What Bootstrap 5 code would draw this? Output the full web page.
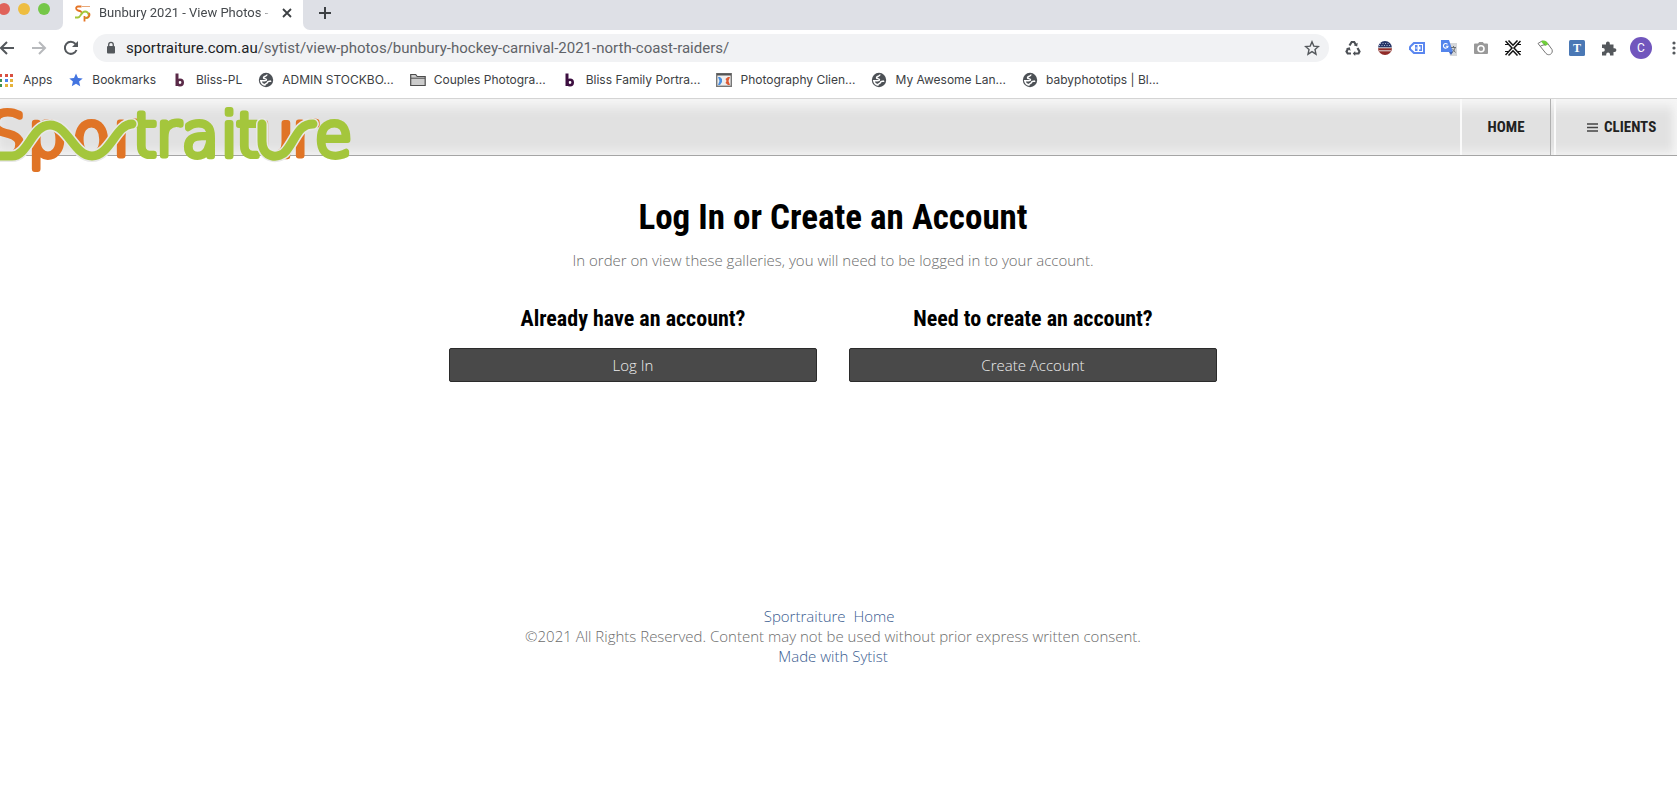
<!DOCTYPE html>
<html lang="en">
<head>
<meta charset="utf-8">
<meta name="viewport" content="width=device-width, initial-scale=1">
<title>Bunbury 2021 - View Photos</title>
<link href="https://cdn.jsdelivr.net/npm/bootstrap@5.3.0/dist/css/bootstrap.min.css" rel="stylesheet">
<style>
body{font-family:"Open Sans",sans-serif;font-weight:300;font-size:15px;line-height:20px;color:#6c6c6c;background:#fff;overflow-x:hidden}
svg{display:block;flex:none}
.browser{font-family:Roboto,sans-serif;font-weight:400;color:#3c4043;border-bottom:1px solid #d4d4d4}
.tabstrip{height:30px;background:#dee0e6}
.lights{width:63px;height:30px;background:#fff}
.lights>div{height:30px;background:#dee0e6;border-bottom-right-radius:7px;padding:3px 0 0}
.light-dot{width:12px;height:12px;border-radius:50%;margin-right:8px}
.page-tab{width:240px;background:#fff;font-size:13px;line-height:26px;padding:0 10px 4px 12px}
.tab-title{color:#45494d;-webkit-mask-image:linear-gradient(90deg,#000 92%,transparent);mask-image:linear-gradient(90deg,#000 92%,transparent)}
.after-tab{background:#fff}
.after-tab>div{background:#dee0e6;border-bottom-left-radius:7px;height:30px;padding:0 15px 4px}
.plain{border:0;background:none;padding:0;color:inherit;display:flex;align-items:center;justify-content:center}
.toolbar{height:36px}
.navs{width:93px}
.navs .plain{width:32px}
.navs .plain:first-child{width:14px;margin-right:9px}
.urlbar{height:28px;border-radius:14px;background:#f1f2f4;padding:0 9px 0 11px;font-size:15px;color:#5f6368}
.urlbar b{font-weight:400;color:#202124}
.ext{width:32px;height:28px}
.ext-more{width:20px;height:28px}
.avatar-c{width:22px;height:22px;border-radius:50%;background:#7156bd;color:#fff;font-size:12px}
.marks{height:32px;gap:16px;font-family:Inter,Roboto,sans-serif;font-size:12px;line-height:16px;padding-bottom:4px}
.marks a{color:#3c4043;text-decoration:none;display:flex;align-items:center;gap:8px;white-space:nowrap}
.cond{font-family:"Liberation Sans Narrow","Roboto Condensed","Open Sans Condensed","DejaVu Sans Condensed",sans-serif;font-weight:700}
.sitebar{height:57px;background:#e1e1e1;border-bottom:1px solid #a5a5a5;box-shadow:inset 0 12px 12px -4px #f6f6f6,inset -8px 0 8px -4px #f4f4f4,inset 0 -10px 10px -6px #f2f2f2}
.sitebar .brand{height:57px}
.sitebar nav a{color:#222;text-decoration:none;font-size:15px;line-height:54px;height:56px;border-left:2px solid #fafafa;display:flex;align-items:center}
.nav-home{width:91px;border-right:1px solid #b0b0b0;justify-content:center}
.nav-clients{width:123px;margin-left:3px;padding-left:31px;gap:6px}
.content{padding:40px 11px 0 0}
.login{width:768px;max-width:100%}
h1{font-size:35px;line-height:44px;color:#000;margin:0}
h2{font-size:22px;line-height:28px;color:#000;margin:0 0 15px}
.intro{margin:10px 0 35px}
.login .row{--bs-gutter-x:32px}
.dark-btn{background:#494949;border:1px solid #2b2b2b;border-radius:2px;color:#eee;font-weight:300;font-size:15px;line-height:20px;padding:6px}
footer{padding:224px 11px 0 0}
footer a{color:#3a5c90;text-decoration:none}
</style>
<script src="https://cdn.jsdelivr.net/npm/bootstrap@5.3.0/dist/js/bootstrap.bundle.min.js"></script>
</head>
<body>
<svg width="0" height="0" class="position-absolute" aria-hidden="true">
<symbol id="globe" viewBox="0 0 16 16"><circle cx="8" cy="8" r="7.200" fill="#4d5156"/><path d="M8.800 2.500c.6 2-3.600 1.500-3.300 3.300.3 1.300 3 .3 3 2 0 .9-1 1-2 1H2.800c.5 2.200 2 3.800 4 4.200.2-1.500 2.500-1.200 2.700-2.700.2-1.400 2.300-.7 3.700-1.300" fill="none" stroke="#fff" stroke-width="1.500"/></symbol>
<symbol id="bliss" viewBox="0 0 16 16"><path d="M5 1.500v12.500" stroke="currentColor" stroke-width="3"/><circle cx="8" cy="10.500" r="2.700" fill="none" stroke="currentColor" stroke-width="2.600"/></symbol>
</svg>

<div class="browser">
  <div class="tabstrip d-flex">
    <div class="lights"><div class="d-flex">
      <span class="light-dot" style="background:#e0625a;margin-left:-2px"></span><span class="light-dot" style="background:#eebd40"></span><span class="light-dot" style="background:#75c748"></span>
    </div></div>
    <div class="page-tab d-flex align-items-center">
      <svg width="16" height="17" viewBox="0 0 16 17" fill="none" stroke-width="1.800"><path d="M6.500 1.500H3C.5 1.500.5 5 3 5.500c3 .6 4 1.500 3.500 3" stroke="#e57425"/><path d="M7 1.500h8" stroke="#e9a878" stroke-width="1"/><path d="M0 12.500h3c3 0 3-6 7-6s5 6 2 6.500H9.500" stroke="#a5c83d"/><path d="M9.500 16.500V11M14 8c1.500 3-1 5-3 4.500" stroke="#e57425"/></svg>
      <span class="tab-title ms-2 flex-grow-1 text-nowrap overflow-hidden">Bunbury 2021 - View Photos -</span>
      <button class="plain ms-2" aria-label="Close tab"><svg width="12" height="12" viewBox="0 0 12 12" stroke="#3c4043" stroke-width="1.800"><path d="M2 2l8 8M10 2l-8 8"/></svg></button>
    </div>
    <div class="after-tab flex-grow-1"><div class="d-flex"><button class="plain" aria-label="New tab"><svg width="14" height="14" viewBox="0 0 14 14" stroke="#3c4043" stroke-width="2"><path d="M7 1v12M1 7h12"/></svg></button></div></div>
  </div>

  <div class="toolbar d-flex align-items-center">
    <div class="navs d-flex">
      <button class="plain" aria-label="Back"><svg width="14" height="16" viewBox="0 0 14 16" fill="none" stroke="#54585c" stroke-width="2"><path d="M14 8H1M7 2L1 8l6 6"/></svg></button>
      <button class="plain" aria-label="Forward"><svg width="16" height="16" viewBox="0 0 16 16" fill="none" stroke="#b7b9bc" stroke-width="2"><path d="M1 8h13M8 2l6 6-6 6"/></svg></button>
      <button class="plain" aria-label="Reload"><svg width="16" height="16" viewBox="0 0 16 16"><path d="M13.500 10A6 6 0 1 1 12.500 4" fill="none" stroke="#54585c" stroke-width="2"/><path d="M15 1v6H9z" fill="#54585c"/></svg></button>
    </div>
    <div class="urlbar d-flex align-items-center flex-grow-1">
      <svg width="14" height="14" viewBox="0 0 14 14"><rect x="3" y="5" width="8" height="7.500" rx="1" fill="#54585c"/><path d="M4.700 6V3.700a2.300 2.300 0 0 1 4.600 0V6" fill="none" stroke="#54585c" stroke-width="1.300"/></svg>
      <div class="flex-grow-1 ps-2 text-nowrap"><b>sportraiture.com.au</b>/sytist/view-photos/bunbury-hockey-carnival-2021-north-coast-raiders/</div>
      <button class="plain" aria-label="Bookmark this page"><svg width="16" height="16" viewBox="0 0 16 16"><path d="M8 1.800l1.800 4.300 4.700.4-3.500 3.100 1 4.600L8 11.700l-4 2.500 1-4.600L1.500 6.500l4.700-.4z" fill="none" stroke="#54585c" stroke-width="1.400"/></svg></button>
    </div>
    <div class="d-flex ps-2">
      <button class="plain ext" aria-label="Recycle"><svg width="16" height="16" viewBox="0 0 16 16" fill="none" stroke="#4d5156" stroke-width="2.200"><path d="M4.500 5.500L6.700 2h2.500l1.800 3M12.500 8l2 3.500-1 2H9.500M6 13.500H2.700L1.500 11.500 3 8.800"/><path d="M12.700 2.800l-.5 3.700-3.400-1.300zM10.200 11v5L7.800 13.500zM1 8.200l3.800-1 .8 3.600z" fill="#4d5156" stroke="none"/></svg></button>
      <button class="plain ext" aria-label="Flag badge"><svg width="16" height="16" viewBox="0 0 16 16"><path d="M1 8a7 7 0 0 1 14 0z" fill="#263566"/><path d="M1 8a7 7 0 0 0 14 0z" fill="#912b27"/><path d="M1 7.800h14M2 10.800h12" stroke="#ddd"/><path d="M3 3.500h10M2 5.500h12" stroke="#a9b3d0" stroke-dasharray="1 1.500"/></svg></button>
      <button class="plain ext" aria-label="Tag"><svg width="16" height="14" viewBox="0 0 16 14"><path d="M4.500 1H16v12H4.500L0 8.500v-3z" fill="#5b87f0"/><path d="M5.500 3H14v8H5.500L2 7.700V6.300z" fill="#fff"/><path d="M6 4h2.500v6H6zM10 4h3v6h-3V8.500h1.500v-3H10z" fill="#5b87f0"/><path d="M6.500 7h2" stroke="#fff"/></svg></button>
      <button class="plain ext" aria-label="Translate"><svg width="16" height="16" viewBox="0 0 16 16"><path d="M6 3h10v13H9z" fill="#d5d7da"/><path d="M0 0h8l4 12H0z" fill="#5485ec"/><path d="M8 12h4l-2 3z" fill="#3b5fb5"/><path d="M6.500 4.300A2.300 2.300 0 1 0 7 6.300H4.800" fill="none" stroke="#fff" stroke-width="1.100"/><path d="M10 7.500h5M12.500 6v1.500M14 8c-.5 2-1.500 3.500-3 4.500M11.500 9l3 3.500" stroke="#6b7075" fill="none"/></svg></button>
      <button class="plain ext" aria-label="Camera"><svg width="16" height="16" viewBox="0 0 16 16"><path d="M2 3.500h3L6.200 2h3.600L11 3.500h3a1 1 0 0 1 1 1V13a1 1 0 0 1-1 1H2a1 1 0 0 1-1-1V4.500a1 1 0 0 1 1-1z" fill="#999"/><circle cx="8" cy="8.700" r="3" fill="#999" stroke="#fff" stroke-width="1.600"/></svg></button>
      <button class="plain ext" aria-label="Crossed arrows"><svg width="16" height="16" viewBox="0 0 16 16" fill="none" stroke="#111" stroke-width="1.500"><path d="M.5 1L7 8 .5 15M15.500 1L9 8l6.500 7M3.500.5L8 5.200 12.500.5M3.500 15.500L8 10.800l4.500 4.700"/><path d="M0 4.500h3M13 4.500h3M0 11.500h3M13 11.500h3" stroke-width="1.200"/></svg></button>
      <button class="plain ext" aria-label="Mouse"><svg width="16" height="16" viewBox="0 0 16 16"><path d="M1 3.500L5 1l5 1.500 5 7c1.500 4-3 7-6 4z" fill="#fff" stroke="#777"/><path d="M4 1.500c3-2 6-.5 7 3L8 6z" fill="#6fcf3a"/><path d="M3.500 6L8 4.500" stroke="#777"/></svg></button>
      <button class="plain ext" aria-label="T extension"><svg width="16" height="16" viewBox="0 0 16 16"><rect width="16" height="16" rx="1.500" fill="#4a78b5"/><text x="8" y="12" text-anchor="middle" font-family="Liberation Serif,serif" font-weight="700" font-size="12" fill="#fff">T</text></svg></button>
      <button class="plain ext" aria-label="Extensions"><svg width="16" height="16" viewBox="0 0 16 16"><path d="M1 4.500h4V3.300a1.900 1.900 0 0 1 3.800 0v1.200h3.700v3.700h1a1.900 1.900 0 0 1 0 3.800h-1v3.500H9v-1a1.900 1.900 0 0 0-3.800 0v1H1v-3.800h1a1.800 1.800 0 0 0 0-3.600H1z" fill="#54585c"/></svg></button>
      <button class="plain ext" aria-label="Profile C"><span class="avatar-c d-flex align-items-center justify-content-center">C</span></button>
      <button class="plain ext-more justify-content-end" aria-label="Menu"><svg width="6" height="16" viewBox="0 0 6 16" fill="#54585c"><circle cx="3" cy="3" r="1.600"/><circle cx="3" cy="8" r="1.600"/><circle cx="3" cy="13" r="1.600"/></svg></button>
    </div>
  </div>

  <nav class="marks d-flex align-items-center overflow-hidden" aria-label="Bookmarks bar">
    <a href="#"><svg width="15" height="13" viewBox="0 0 15 13"><path d="M0 1.500h2M5 1.500h3M10 1.500h3" stroke="#d84f41" stroke-width="3"/><path d="M0 6.500h2" stroke="#3f8f53" stroke-width="3"/><path d="M5 6.500h3" stroke="#4a83ee" stroke-width="3"/><path d="M10 6.500h3M5 11.500h3M10 11.500h3" stroke="#e5b33b" stroke-width="3"/><path d="M0 11.500h2" stroke="#3f8f53" stroke-width="3"/></svg>Apps</a>
    <a href="#"><svg width="16" height="16" viewBox="0 0 16 16"><path d="M8 1.500l2 4.500 4.700.4-3.600 3.200 1.100 4.700L8 11.800l-4.200 2.500 1.100-4.700L1.300 6.400 6 6z" fill="#4374e0"/></svg>Bookmarks</a>
    <a href="#"><svg width="16" height="16" color="#5a2a48"><use href="#bliss"/></svg>Bliss-PL</a>
    <a href="#"><svg width="16" height="16"><use href="#globe"/></svg>ADMIN STOCKBO...</a>
    <a href="#"><svg width="16" height="14" viewBox="0 0 16 14"><path d="M.7 12.500v-11h5l1.500 2h8v9z" fill="#ccc" stroke="#4d4d4d" stroke-width="1.200"/><path d="M1 5.200h14" stroke="#4d4d4d"/></svg>Couples Photogra...</a>
    <a href="#"><svg width="16" height="16" color="#3d0f40"><use href="#bliss"/></svg>Bliss Family Portra...</a>
    <a href="#"><svg width="16" height="14" viewBox="0 0 16 14"><rect x=".7" y=".7" width="14.600" height="12.600" fill="#eee" stroke="#777" stroke-width="1.400"/><path d="M1 1.500h14" stroke="#555" stroke-width="2"/><path d="M2 4h2l2 2v3l-2 3H2l1.500-4z" fill="#4a8fe0"/><path d="M14 4h-2l-2.500 2 1 2-1 2 2.500 2h2l-1.500-4z" fill="#dd5a34"/></svg>Photography Clien...</a>
    <a href="#"><svg width="16" height="16"><use href="#globe"/></svg>My Awesome Lan...</a>
    <a href="#"><svg width="16" height="16"><use href="#globe"/></svg>babyphototips | Bl...</a>
  </nav>
</div>

<header class="sitebar d-flex justify-content-between">
  <a class="brand" href="#" aria-label="Sportraiture">
    <svg width="360" height="80" viewBox="0 0 360 80" font-family="'DejaVu Sans Light','DejaVu Sans',sans-serif" font-weight="200" stroke-linejoin="round" stroke-linecap="round">
      <g font-size="60" fill="#e07426" stroke="#e07426" stroke-width="6"><text x="-12" y="57">S</text><text x="28" y="57">p</text><text x="73" y="57">o</text><text x="113" y="57">r</text><text x="256" y="57">u</text><text x="292" y="57">r</text></g>
      <g font-size="60" fill="#a4c63c" stroke="#a4c63c" stroke-width="6"><text x="133" y="57">t</text><text x="156" y="57">r</text><text x="182" y="57">a</text><text x="221" y="57">i</text><text x="236" y="57">t</text><text x="315" y="57">e</text></g>
      <g fill="none"><path d="M-8 57H12C28 57 32 26 50 26S74 57 92 57S116 25 132 25" stroke="#e8e8e8" stroke-width="12"/><path d="M-8 57H12C28 57 32 26 50 26S74 57 92 57S116 25 132 25" stroke="#a4c63c" stroke-width="9"/><path d="M262 25V42C262 60 280 60 286 52C296 40 298 25 313 25" stroke="#e8e8e8" stroke-width="12"/><path d="M262 25V42C262 60 280 60 286 52C296 40 298 25 313 25" stroke="#a4c63c" stroke-width="9"/></g>
    </svg>
  </a>
  <nav class="d-flex cond">
    <a class="nav-home" href="#">HOME</a>
    <a class="nav-clients" href="#"><svg width="11" height="9" viewBox="0 0 11 9" stroke="#444" stroke-width="1.500"><path d="M0 1h11M0 4.500h11M0 8h11"/></svg>CLIENTS</a>
  </nav>
</header>

<main class="content text-center">
  <div class="login mx-auto">
    <h1 class="cond">Log In or Create an Account</h1>
    <p class="intro">In order on view these galleries, you will need to be logged in to your account.</p>
    <div class="row">
      <div class="col-6"><h2 class="cond">Already have an account?</h2><button class="dark-btn w-100">Log In</button></div>
      <div class="col-6"><h2 class="cond">Need to create an account?</h2><button class="dark-btn w-100">Create Account</button></div>
    </div>
  </div>
</main>
<footer class="text-center">
  <div><a href="#">Sportraiture</a>&nbsp; <a href="#">Home</a>&nbsp;&nbsp;</div>
  <div>©2021 All Rights Reserved. Content may not be used without prior express written consent.</div>
  <div><a href="#">Made with Sytist</a></div>
</footer>
</body>
</html>
